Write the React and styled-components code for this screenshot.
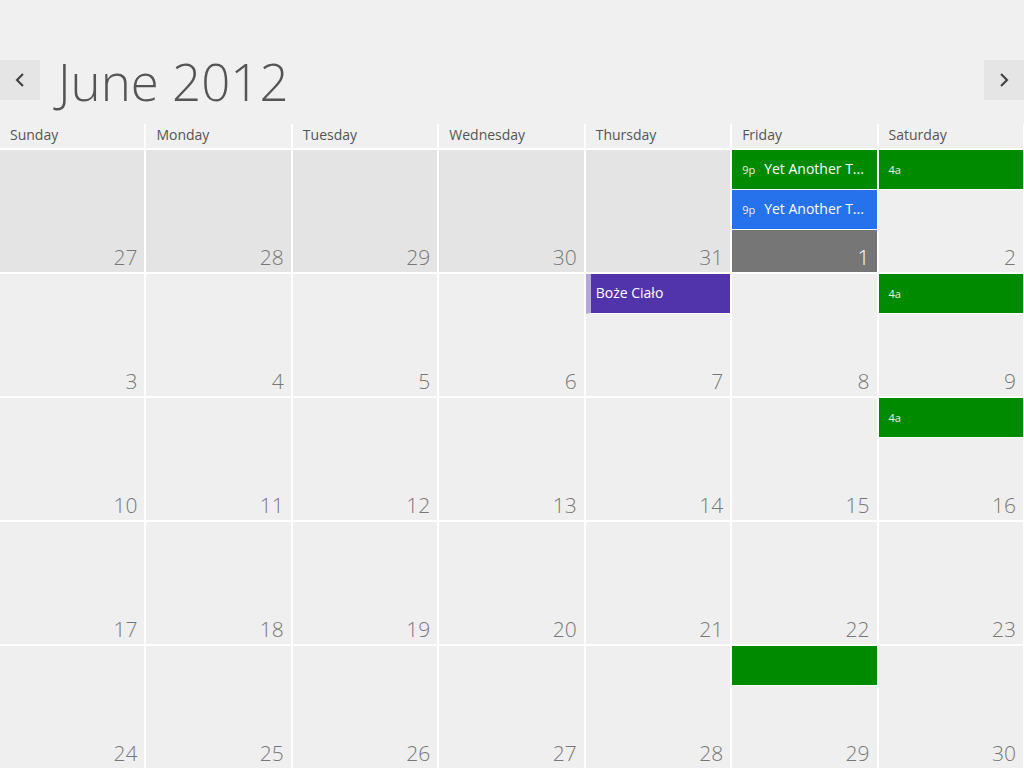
import React from 'react';
import styled, {createGlobalStyle} from 'styled-components';

const GlobalStyle = createGlobalStyle`
    html, body {
        margin: 0;
        padding: 0;
        background: #f0f0f0;
        font-family: "Open Sans", "Noto Sans", sans-serif;
        overflow: hidden;
    }
`;

const weekdays = ['Sunday', 'Monday', 'Tuesday', 'Wednesday', 'Thursday', 'Friday', 'Saturday'];

// 5 tygodni, pierwsze 5 dni to maj
const days = [
    27, 28, 29, 30, 31, 1, 2,
    3, 4, 5, 6, 7, 8, 9,
    10, 11, 12, 13, 14, 15, 16,
    17, 18, 19, 20, 21, 22, 23,
    24, 25, 26, 27, 28, 29, 30,
];

const events = {
    5: [
        {time: '9p', title: 'Yet Another T...', color: '#008a00'},
        {time: '9p', title: 'Yet Another T...', color: '#2672ec'},
    ],
    6: [{time: '4a', color: '#008a00'}],
    11: [{title: 'Boże Ciało', color: '#5133ab', strip: '#b4a7d9'}],
    13: [{time: '4a', color: '#008a00'}],
    20: [{time: '4a', color: '#008a00'}],
    33: [{color: '#008a00'}],
};

const App = () => {
    return (
        <>
            <GlobalStyle/>
            <Page>
                <TopBar>
                    <NavButton>
                        <svg width="12" height="16" viewBox="0 0 12 16">
                            <polyline points="9,2 3,8 9,14" fill="none" stroke="#444" strokeWidth="2.2"/>
                        </svg>
                    </NavButton>
                    <Title>June 2012</Title>
                    <Spacer/>
                    <NavButton>
                        <svg width="12" height="16" viewBox="0 0 12 16">
                            <polyline points="3,2 9,8 3,14" fill="none" stroke="#444" strokeWidth="2.2"/>
                        </svg>
                    </NavButton>
                </TopBar>
                <Grid>
                    {weekdays.map((d) => (
                        <DayName key={d}>{d}</DayName>
                    ))}
                    {days.map((n, i) => (
                        <Cell key={i} $past={i < 5} $today={i === 5}>
                            {(events[i] || []).map((ev, j) => (
                                <Event key={j} $color={ev.color} $strip={ev.strip}>
                                    {ev.time && <Time>{ev.time}</Time>}
                                    {ev.title && <EventTitle>{ev.title}</EventTitle>}
                                </Event>
                            ))}
                            <DayNumber $today={i === 5}>{n}</DayNumber>
                        </Cell>
                    ))}
                </Grid>
            </Page>
        </>
    );
};
export default App;

const Page = styled.div`
    width: 1024px;
    height: 768px;
    padding-top: 60px;
    box-sizing: border-box;
`;

const TopBar = styled.div`
    display: flex;
    align-items: center;
    height: 40px;
    margin-bottom: 24px;
`;

const NavButton = styled.div`
    width: 40px;
    height: 40px;
    background: #e5e5e5;
    display: flex;
    align-items: center;
    justify-content: center;
`;

const Title = styled.div`
    margin-left: 18px;
    font-size: 51px;
    font-weight: 300;
    color: #555;
    line-height: 40px;
    margin-top: 2px;
`;

const Spacer = styled.div`
    flex: 1;
`;

const Grid = styled.div`
    display: grid;
    grid-template-columns: repeat(7, 1fr);
    grid-template-rows: 24px repeat(5, 122px);
    gap: 2px;
    padding-right: 1px;
    background: #fff;
`;

const DayName = styled.div`
    background: #f0f0f0;
    font-size: 14px;
    color: #555;
    padding-left: 10px;
    line-height: 22px;
`;

const Cell = styled.div`
    position: relative;
    display: flex;
    flex-direction: column;
    background: ${(p) => (p.$today ? '#767676' : p.$past ? '#e4e4e4' : '#efefef')};
`;

const Event = styled.div`
    height: 40px;
    flex-shrink: 0;
    border-bottom: 1px solid #fff;
    background: ${(p) => p.$color};
    border-left: ${(p) => (p.$strip ? `5px solid ${p.$strip}` : 'none')};
    display: flex;
    align-items: center;
    padding-left: ${(p) => (p.$strip ? '5px' : '10px')};
    padding-bottom: 2px;
    box-sizing: border-box;
    color: #fff;
    white-space: nowrap;
    overflow: hidden;
`;

const Time = styled.span`
    font-size: 11px;
    color: #e8f0e8;
    margin-right: 9px;
    margin-top: 2px;
`;

const EventTitle = styled.span`
    font-size: 14px;
`;

const DayNumber = styled.div`
    margin-top: auto;
    text-align: right;
    padding-right: 7px;
    font-size: 21px;
    font-weight: 300;
    color: ${(p) => (p.$today ? '#fff' : '#777')};
    line-height: 28px;
    padding-bottom: 1px;
`;
